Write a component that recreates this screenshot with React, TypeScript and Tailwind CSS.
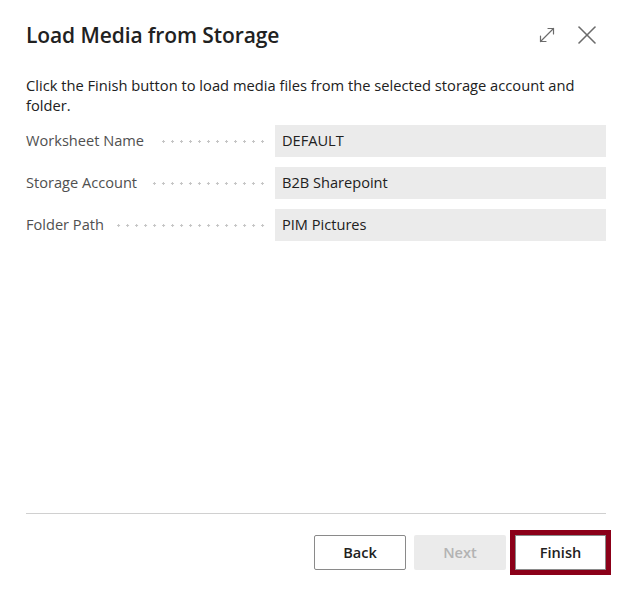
import React from "react";

const fields = [
  { label: "Worksheet Name", value: "DEFAULT" },
  { label: "Storage Account", value: "B2B Sharepoint" },
  { label: "Folder Path", value: "PIM Pictures" },
];

export default function App() {
  return (
    <div
      className="h-screen w-full bg-white flex flex-col pl-[26px] pr-[25px] text-[#212121]"
      style={{ fontFamily: '"Open Sans", "Noto Sans", sans-serif' }}
    >
      <div className="flex items-center justify-between pt-[20px] h-[50px]">
        <h1 className="text-[21px] leading-[28px] font-semibold tracking-[-0.1px]">
          Load Media from Storage
        </h1>
        <div className="flex items-center gap-[20px] pr-[9px]">
          <svg width="20" height="20" viewBox="0 0 20 20" fill="none" stroke="#6b6b6b" strokeWidth="1.2" strokeLinecap="round" strokeLinejoin="round">
            <path d="M3.5 16.5 L16.5 3.5" />
            <path d="M11 3.5 H16.5 V9" />
            <path d="M3.5 11 V16.5 H9" />
          </svg>
          <svg width="20" height="20" viewBox="0 0 20 20" fill="none" stroke="#6b6b6b" strokeWidth="1.6" strokeLinecap="round">
            <path d="M2 2 L18 18" />
            <path d="M18 2 L2 18" />
          </svg>
        </div>
      </div>
      <p className="mt-[25px] text-[14.7px] leading-[20px] text-[#212121]">
        Click the Finish button to load media files from the selected storage account and folder.
      </p>
      <div className="mt-[10px] flex flex-col gap-[10px]">
        {fields.map((f) => (
          <div key={f.label} className="flex items-center h-[32px]">
            <div className="w-[249px] flex items-center pr-[8px]">
              <span className="text-[14.6px] text-[#505050] whitespace-nowrap">{f.label}</span>
              <span className="flex-1 ml-[12px] h-[3px] translate-y-[1px] bg-[radial-gradient(circle,#c4c4c4_1px,transparent_1.3px)] bg-[length:9px_3px] bg-right" />
            </div>
            <div className="flex-1 h-[32px] bg-[#ebebeb] flex items-center px-[7px] text-[14.6px] text-[#212121]">
              {f.value}
            </div>
          </div>
        ))}
      </div>
      <div className="flex-1" />
      <div className="border-t border-[#d0d0d0]" />
      <div className="flex justify-end items-center pt-[16px] pb-[20px]">
        <button className="w-[92px] h-[35px] border border-[#8a8a8a] rounded-[2px] bg-white text-[14.6px] font-semibold text-[#212121]">
          Back
        </button>
        <button className="ml-[8px] w-[92px] h-[35px] rounded-[2px] bg-[#ebebeb] text-[14.6px] font-semibold text-[#b3b3b3]">
          Next
        </button>
        <div className="ml-[4px] border-[5px] border-[#8b0019] -mr-[5px]">
          <button className="block w-[91px] h-[35px] border border-[#8a8a8a] bg-white text-[14.6px] font-semibold text-[#212121]">
            Finish
          </button>
        </div>
      </div>
    </div>
  );
}
